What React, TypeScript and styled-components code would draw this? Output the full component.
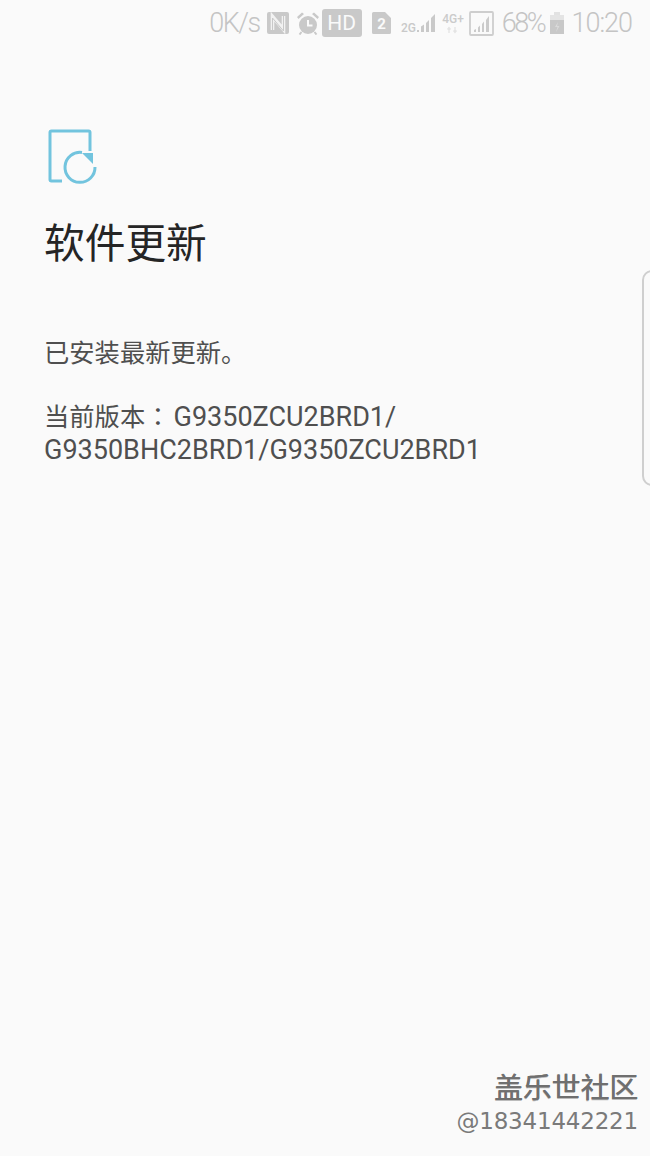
import React from "react"
import styled, { createGlobalStyle } from "styled-components"

const GlobalStyle = createGlobalStyle`
	html, body {
		margin: 0;
		padding: 0;
		background: #fafafa;
	}
`

const App: React.FC = () => {
	return (
		<Page>
			<GlobalStyle />
			<StatusBar>
				<StatusText $tracking={-1.5}>0K/s</StatusText>
				<NfcIcon />
				<AlarmIcon />
				<HdBadge>HD</HdBadge>
				<SimIcon />
				<MobileSignal />
				<LteIcon />
				<WifiSignal />
				<StatusText $gap={8} $tracking={-2.4}>
					68%
				</StatusText>
				<BatteryIcon />
				<StatusText $gap={7}>10:20</StatusText>
			</StatusBar>
			<Content>
				<UpdateIcon />
				<Title>软件更新</Title>
				<Body>
					<Cjk>已安装最新更新。</Cjk>
				</Body>
				<Version>
					<Cjk>当前版本</Cjk>
					<Colon>：</Colon>G9350ZCU2BRD1/
					<br />
					G9350BHC2BRD1/G9350ZCU2BRD1
				</Version>
			</Content>
			<EdgeHandle />
			<Watermark>
				<WatermarkName>盖乐世社区</WatermarkName>
				<WatermarkUser>@18341442221</WatermarkUser>
			</Watermark>
		</Page>
	)
}

const NfcIcon = () => (
	<Glyph width="22" height="22" viewBox="0 0 22 22" $left={7}>
		<rect width="22" height="22" rx="2" fill="#c9c9c9" />
		<path d="M5.500 18V4.500L16.500 17.500V4" fill="none" stroke="#f2f2f2" strokeWidth="3.600" />
		<path d="M5.500 18V6L16.500 19V4" fill="none" stroke="#c9c9c9" strokeWidth="1" />
	</Glyph>
)

const AlarmIcon = () => (
	<Glyph width="22" height="23" viewBox="0 0 22 23" $left={8}>
		<circle cx="11" cy="13" r="9" fill="#c9c9c9" />
		<path d="M0 5l5-4.500 2 1.500-5.500 5zM22 5l-5-4.500-2 1.500 5.500 5z" fill="#c9c9c9" />
		<path d="M11 8v5.500h4.500" fill="none" stroke="#fafafa" strokeWidth="2" />
		<path d="M4.500 20l-2 2.500M17.500 20l2 2.500" stroke="#c9c9c9" strokeWidth="2" />
	</Glyph>
)

const SimIcon = () => (
	<Glyph width="19" height="22" viewBox="0 0 19 22" $left={10}>
		<path d="M1.500 0H13l6 6v14.500a1.500 1.500 0 0 1-1.500 1.500h-16A1.500 1.500 0 0 1 0 20.500v-19A1.500 1.500 0 0 1 1.500 0z" fill="#c9c9c9" />
		<text x="9.500" y="17" textAnchor="middle" fontFamily="Roboto, sans-serif" fontWeight="700" fontSize="15" fill="#fafafa">
			2
		</text>
	</Glyph>
)

const MobileSignal = () => (
	<Glyph width="36" height="24" viewBox="0 0 36 24" $left={10}>
		<text x="0" y="21" fontFamily="Roboto, sans-serif" fontSize="12" fontWeight="500" fill="#c9c9c9">
			2G
		</text>
		<path d="M16 19h2v2h-2zM20 15.500l3-2V21h-3zM25 12l3-3v12h-3zM30 7l4-4v18h-4z" fill="#c9c9c9" />
	</Glyph>
)

const LteIcon = () => (
	<Glyph width="22" height="24" viewBox="0 0 22 24" $left={5}>
		<text x="11" y="12" textAnchor="middle" fontFamily="Roboto, sans-serif" fontSize="12" fontWeight="500" fill="#cbcbcb">
			4G+
		</text>
		<path d="M7 22v-5M5.500 18.500L7 16.500l1.500 2M13 16v5M11.500 19.500L13 21.500l1.500-2" stroke="#e4e4e4" strokeWidth="1.300" fill="none" />
	</Glyph>
)

const WifiSignal = () => (
	<Glyph width="25" height="25" viewBox="0 0 25 25" $left={5}>
		<rect x="1" y="1" width="23" height="23" rx="1" fill="none" stroke="#cecece" strokeWidth="1.800" />
		<path d="M5 19l2-1v3H5zM9 16.500l2-2V21H9zM13 13l2-2.500V21h-2zM17 9l3-4v16h-3z" fill="#cbcbcb" />
	</Glyph>
)

const BatteryIcon = () => (
	<Glyph width="14" height="22" viewBox="0 0 14 22" $left={6}>
		<path d="M4 0h6v3H4z" fill="#e2e2e2" />
		<path d="M0 3h14v5H0z" fill="#e4e4e4" />
		<path d="M0 8h14v14H0z" fill="#c8c8c8" />
		<path d="M8 10l-3 5h2.500L6 20l3.500-6H7z" fill="#dadada" />
	</Glyph>
)

const UpdateIcon = () => (
	<IconWrap width="50" height="56" viewBox="0 0 50 56">
		<path
			d="M14 52H3.500A1.500 1.500 0 0 1 2 50.500v-47A1.500 1.500 0 0 1 3.500 2h37A1.500 1.500 0 0 1 42 3.500V22"
			fill="none"
			stroke="#72c4de"
			strokeWidth="3"
		/>
		<path d="M34 23.500A15 15 0 1 0 47 38" fill="none" stroke="#72c4de" strokeWidth="3" />
		<path d="M34 24h11v11z" fill="#72c4de" />
	</IconWrap>
)

const Page = styled.div`
	position: relative;
	width: 650px;
	height: 1156px;
	overflow: hidden;
	display: flex;
	flex-direction: column;
	background: #fafafa;
	font-family: Roboto, "Noto Sans CJK SC", sans-serif;
`

const StatusBar = styled.div`
	display: flex;
	align-items: center;
	justify-content: flex-end;
	height: 46px;
	padding-right: 18px;
	box-sizing: border-box;
`

const StatusText = styled.span<{ $gap?: number; $tracking?: number }>`
	margin-left: ${(p) => p.$gap ?? 0}px;
	font-size: 27px;
	font-weight: 300;
	letter-spacing: ${(p) => p.$tracking ?? -1}px;
	line-height: 46px;
	color: #c4c4c4;
	white-space: nowrap;
`

const Glyph = styled.svg<{ $left: number }>`
	display: block;
	flex-shrink: 0;
	margin-left: ${(p) => p.$left}px;
`

const HdBadge = styled.span`
	margin-left: 3px;
	width: 40px;
	height: 28px;
	border-radius: 3px;
	background: #c9c9c9;
	color: #fafafa;
	font-size: 21px;
	line-height: 28px;
	text-align: center;
`

const Content = styled.div`
	display: flex;
	flex-direction: column;
	align-items: flex-start;
	padding: 83px 44px 0;
`

const IconWrap = styled.svg`
	display: block;
	margin-left: 4px;
`

const Title = styled.h1`
	margin: 31px 0 0;
	font-size: 40.700px;
	font-weight: 400;
	line-height: 56px;
	color: #252525;
`

const Body = styled.p`
	margin: 64px 0 0;
	font-size: 27px;
	line-height: 34px;
	color: #4f4f4f;
`

const Cjk = styled.span`
	font-size: 25.300px;
`

const Colon = styled.span`
	font-family: "Noto Sans CJK TC", sans-serif;
	font-size: 25.300px;
	margin-right: 3px;
`

const Version = styled.p`
	margin: 28px 0 0;
	font-size: 27px;
	line-height: 33px;
	color: #4f4f4f;
	white-space: nowrap;
`

const EdgeHandle = styled.div`
	position: absolute;
	top: 270px;
	right: -12px;
	width: 20px;
	height: 216px;
	box-sizing: border-box;
	border: 2px solid #cfcfcf;
	border-radius: 10px;
`

const Watermark = styled.div`
	position: absolute;
	right: 12px;
	bottom: 20px;
	display: flex;
	flex-direction: column;
	align-items: flex-end;
`

const WatermarkName = styled.div`
	font-family: "Noto Sans CJK SC", sans-serif;
	font-size: 28.800px;
	line-height: 36px;
	font-weight: 400;
	color: #6f6f6f;
	text-shadow: 0.5px 0 0 #777, 0 1px 0 #bbb;
`

const WatermarkUser = styled.div`
	margin-top: 2px;
	font-family: "DejaVu Sans", sans-serif;
	font-size: 23px;
	font-weight: 400;
	line-height: 30px;
	letter-spacing: -0.2px;
	color: #7a7a7a;
`

export default App
